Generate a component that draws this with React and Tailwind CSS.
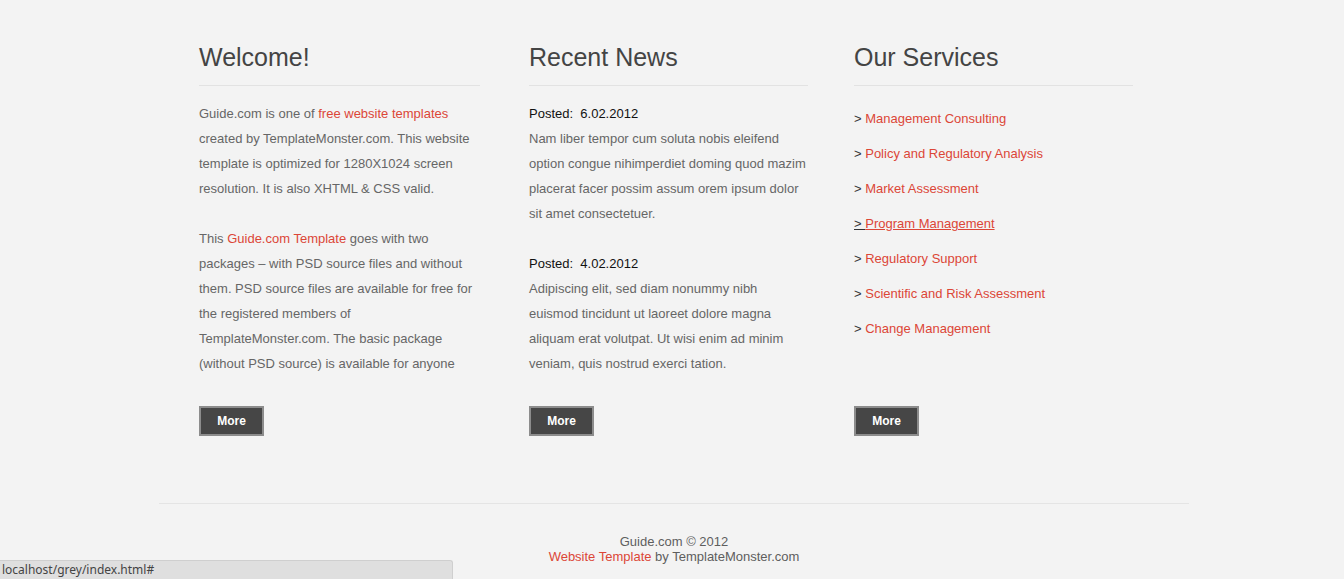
import React from "react";

const font = { fontFamily: '"Liberation Sans", Arial, sans-serif' };

function MoreButton() {
  return (
    <button className="mt-[30px] w-[65px] h-[30px] bg-[#464646] border-2 border-[#8c8c8c] text-white text-[12px] font-bold leading-none flex items-center justify-center">
      More
    </button>
  );
}

function Heading({ children }) {
  return (
    <h2 className="text-[25px] leading-[30px] text-[#444444] pb-[13px] border-b border-[#e2e2e2] mb-[15px]">
      {children}
    </h2>
  );
}

const services = [
  "Management Consulting",
  "Policy and Regulatory Analysis",
  "Market Assessment",
  "Program Management",
  "Regulatory Support",
  "Scientific and Risk Assessment",
  "Change Management",
];

export default function App() {
  return (
    <div className="relative w-full min-h-[579px] bg-[#f3f3f3] overflow-hidden" style={font}>
      <div className="w-[1030px] ml-[159px] pt-[42px]">
        <div className="flex text-[13px] leading-[25px] text-[#666666]">
          <div className="ml-[40px] w-[281px] flex flex-col items-start">
            <div className="w-full">
              <Heading>Welcome!</Heading>
              <p>
                Guide.com is one of <a href="#" className="text-[#dc4637]">free website templates</a> created by TemplateMonster.com. This website template is optimized for 1280X1024 screen resolution. It is also XHTML &amp; CSS valid.
              </p>
              <p className="mt-[25px] pr-[4px]">
                This <a href="#" className="text-[#dc4637]">Guide.com Template</a> goes with two packages – with PSD source files and without them. PSD source files are available for free for the registered members of TemplateMonster.com. The basic package (without PSD source) is available for anyone
              </p>
            </div>
            <MoreButton />
          </div>

          <div className="ml-[49px] w-[279px] flex flex-col items-start">
            <div className="w-full">
              <Heading>Recent News</Heading>
              <p>
                <span className="text-[#111111]">Posted:&nbsp; 6.02.2012</span>
                <br />
                Nam liber tempor cum soluta nobis eleifend option congue nihimperdiet doming quod mazim placerat facer possim assum orem ipsum dolor sit amet consectetuer.
              </p>
              <p className="mt-[25px]">
                <span className="text-[#111111]">Posted:&nbsp; 4.02.2012</span>
                <br />
                Adipiscing elit, sed diam nonummy nibh euismod tincidunt ut laoreet dolore magna aliquam erat volutpat. Ut wisi enim ad minim veniam, quis nostrud exerci tation.
              </p>
            </div>
            <MoreButton />
          </div>

          <div className="ml-[46px] w-[279px] flex flex-col items-start">
            <div className="w-full flex-1">
              <Heading>Our Services</Heading>
              <ul>
                {services.map((s, i) => (
                  <li key={s} className="py-[5px]">
                    <span className={"text-[#333333]" + (i === 3 ? " underline" : "")}>&gt; </span>
                    <a href="#" className={"text-[#dc4637]" + (i === 3 ? " underline" : "")}>{s}</a>
                  </li>
                ))}
              </ul>
            </div>
            <MoreButton />
          </div>
        </div>

        <div className="mt-[67px] border-t border-[#e4e4e4] pt-[30px] text-center text-[13px] leading-[15px] text-[#5e5e5e]">
          <div>Guide.com © 2012</div>
          <div>
            <a href="#" className="text-[#dc4637]">Website Template</a> by TemplateMonster.com
          </div>
        </div>
      </div>

      <div
        className="absolute left-0 bottom-0 w-[453px] h-[19px] bg-[#dfdfdf] border-t border-r border-[#cfcfcf] rounded-tr-[3px] pl-[2px] text-[12px] leading-[18px] text-[#444444]"
        style={{ fontFamily: '"Noto Sans", "Open Sans", sans-serif' }}
      >
        localhost/grey/index.html#
      </div>
    </div>
  );
}
